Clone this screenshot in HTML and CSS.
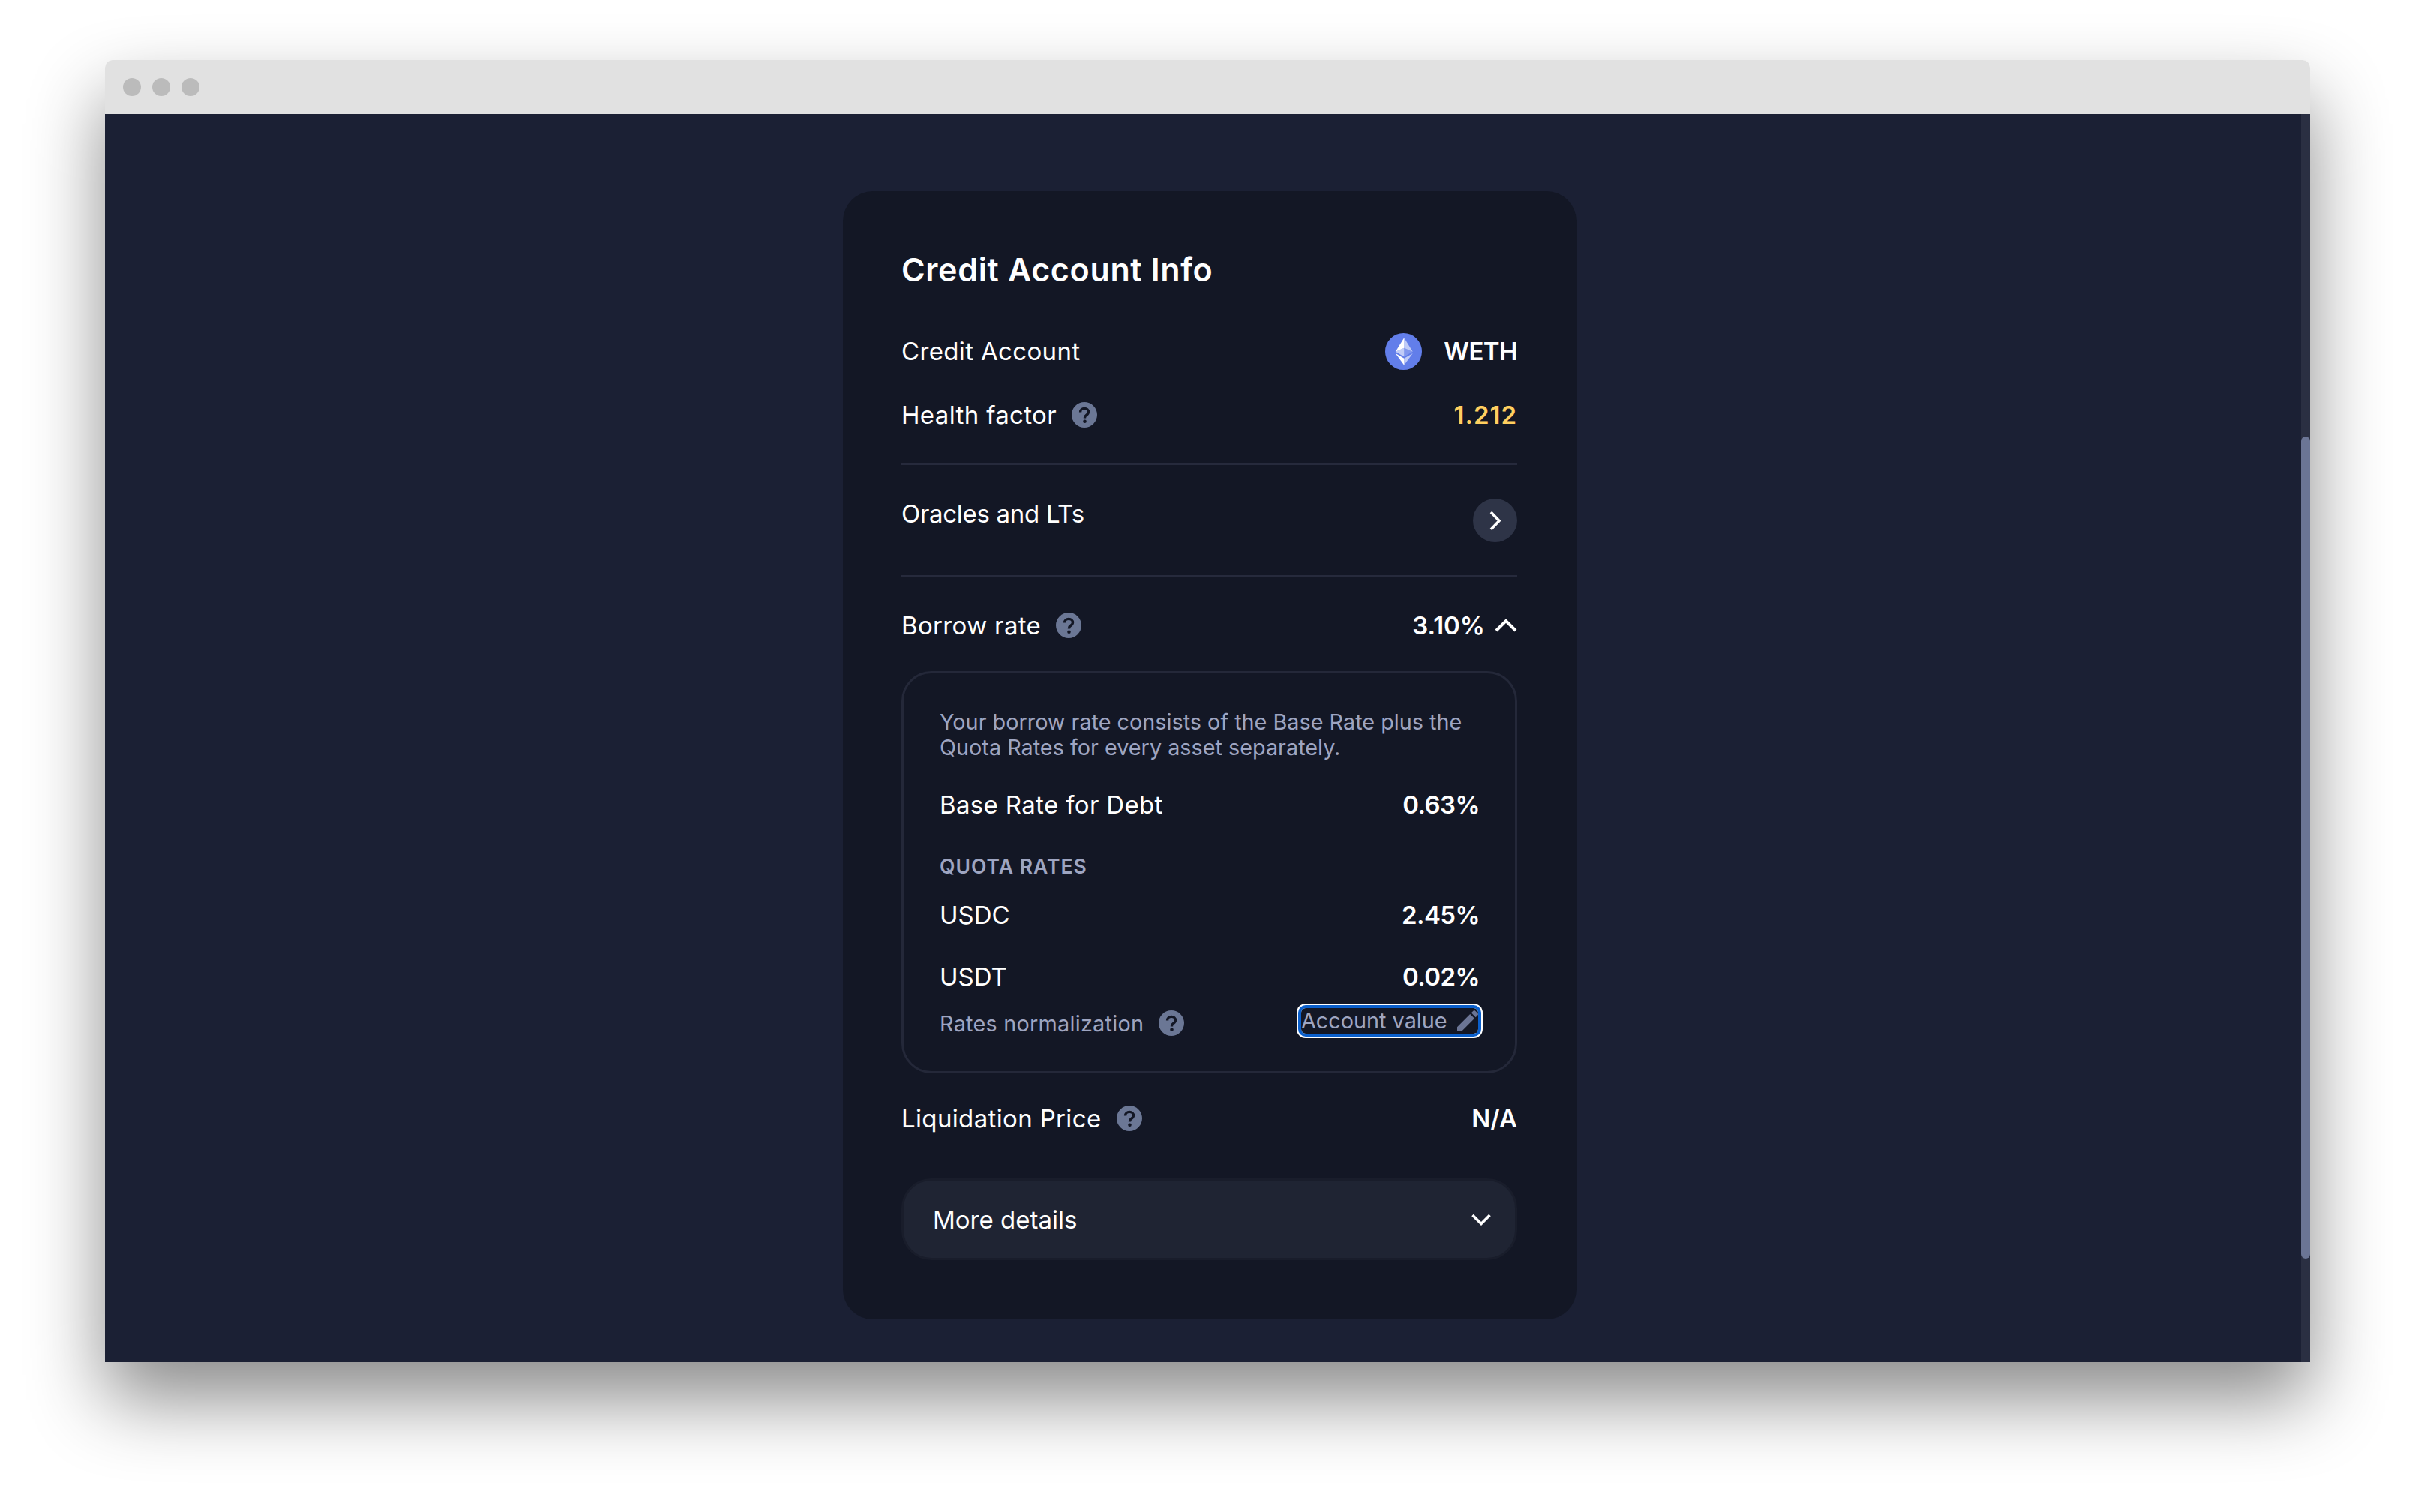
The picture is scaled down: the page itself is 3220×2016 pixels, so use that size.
FILE: index.html
```html
<!DOCTYPE html>
<html lang="en">
<head>
  <meta charset="UTF-8" />
  <title>Credit Account Info</title>
  <link rel="stylesheet" href="styles.css">
</head>
<body>
  <svg class="defs" width="0" height="0">
    <symbol id="help" viewBox="0 0 34 34">
      <circle cx="17" cy="17" r="17" fill="#6b7795"/>
      <path d="M11.6 13.4c0-3 2.4-5 5.5-5s5.4 1.9 5.4 4.7c0 2-1 3.100-2.700 4.200-1.600 1-2.300 1.800-2.300 3.500v.6" fill="none" stroke="#131725" stroke-width="3.400"/>
      <circle cx="17.500" cy="25.800" r="2.300" fill="#131725"/>
    </symbol>
  </svg>

  <div class="window">
    <div class="titlebar">
      <span class="dot"></span>
      <span class="dot"></span>
      <span class="dot"></span>
    </div>
    <div class="viewport">
      <main class="main">
        <section class="card">
          <h1>Credit Account Info</h1>

          <div class="row first">
            <span class="text">Credit Account</span>
            <span class="token">
              <svg class="eth" viewBox="0 0 32 32">
                <circle cx="16" cy="16" r="16" fill="#627eea"/>
                <g fill="#fff">
                  <path fill-opacity=".602" d="M16.498 4v8.87l7.497 3.35z"/>
                  <path d="M16.498 4L9 16.22l7.498-3.35z"/>
                  <path fill-opacity=".602" d="M16.498 21.968v6.027L24 17.616z"/>
                  <path d="M16.498 27.995v-6.028L9 17.616z"/>
                  <path fill-opacity=".2" d="M16.498 20.573l7.497-4.353-7.497-3.348z"/>
                  <path fill-opacity=".602" d="M9 16.22l7.498 4.353v-7.701z"/>
                </g>
              </svg>
              <b class="tight">WETH</b>
            </span>
          </div>
          <div class="row health">
            <span class="label text">Health factor <svg class="help"><use href="#help"/></svg></span>
            <b class="yellow">1.212</b>
          </div>

          <hr class="line top-line">

          <div class="row oracles">
            <span>Oracles and LTs</span>
            <span class="circle-btn">
              <svg viewBox="0 0 19 29" width="19" height="29"><path d="M3 3l11 11.500L3 26" fill="none" stroke="#fff" stroke-width="3.600"/></svg>
            </span>
          </div>

          <hr class="line">

          <div class="row borrow">
            <span class="label text">Borrow rate <svg class="help"><use href="#help"/></svg></span>
            <span class="rate">
              <b>3.10%</b>
              <svg viewBox="0 0 30 18" width="30" height="18"><path d="M2 16L15 3l13 13" fill="none" stroke="#fff" stroke-width="4"/></svg>
            </span>
          </div>

          <div class="box">
            <p class="note">Your borrow rate consists of the Base Rate plus the Quota Rates for every asset separately.</p>
            <div class="row base">
              <span class="text">Base Rate for Debt</span>
              <b class="tight">0.63%</b>
            </div>
            <div class="quota-title">QUOTA RATES</div>
            <div class="row usdc">
              <span>USDC</span>
              <b class="tight">2.45%</b>
            </div>
            <div class="row usdt">
              <span>USDT</span>
              <b class="tight">0.02%</b>
            </div>
            <div class="row norm">
              <span class="label small">Rates normalization <svg class="help"><use href="#help"/></svg></span>
              <button class="select">
                Account value
                <svg viewBox="3 3 18 18" width="28" height="28"><path d="M3 17.250V21h3.750L17.810 9.940l-3.750-3.750L3 17.250zM20.710 7.040c.39-.39.39-1.020 0-1.410l-2.340-2.340c-.39-.39-1.020-.39-1.410 0l-1.830 1.830 3.750 3.750 1.830-1.830z" fill="#6b7595"/></svg>
              </button>
            </div>
          </div>

          <div class="row liquidation">
            <span class="label text">Liquidation Price <svg class="help"><use href="#help"/></svg></span>
            <b>N/A</b>
          </div>

          <div class="more">
            <span>More details</span>
            <svg viewBox="0 0 26 16" width="26" height="16"><path d="M1.500 2L13 13.500 24.500 2" fill="none" stroke="#fff" stroke-width="3.600"/></svg>
          </div>
        </section>
      </main>
      <div class="scrollbar"><div class="thumb"></div></div>
    </div>
  </div>
</body>
</html>
```

FILE: styles.css
```css
html {
  background: #fff;
}
body {
  margin: 0;
  height: 2016px;
  padding-top: 80px;
  box-sizing: border-box;
  overflow: hidden;
  font-family: Inter, "Noto Sans", sans-serif;
  color: #fff;
  font-size: 33px;
}
.defs {
  display: block;
}

/* browser frame */
.window {
  margin: 0 140px;
  width: 2940px;
  border-radius: 10px 10px 0 0;
  box-shadow: 0 50px 100px rgba(0,0,0,0.46);
}
.titlebar {
  height: 72px;
  background: #e1e1e1;
  border-radius: 10px 10px 0 0;
  display: flex;
  align-items: center;
  gap: 15px;
  padding-left: 24px;
}
.dot {
  width: 24px;
  height: 24px;
  border-radius: 50%;
  background: #bbb;
}
.viewport {
  height: 1664px;
  background: #1b2034;
  display: flex;
}
.main {
  flex: 1;
  padding: 103px 0 0 984px;
}
.scrollbar {
  width: 12px;
  background: #2a2f42;
  padding-top: 430px;
}
.thumb {
  height: 1096px;
  background: #6b7595;
  border-radius: 6px;
}

/* card */
.card {
  width: 821px;
  padding: 79px 79px 79px 78px;
  background: #131725;
  border-radius: 40px;
}
h1 {
  margin: 0;
  font-size: 43px;
  line-height: 50px;
  font-weight: 600;
  letter-spacing: 0.65px;
}
.row {
  display: flex;
  justify-content: space-between;
  align-items: center;
  height: 50px;
}
b {
  font-weight: 600;
}
.text {
  letter-spacing: 0.35px;
}
.tight {
  letter-spacing: -0.6px;
}
.first { margin-top: 59px; }
.health { margin-top: 35px; }
.yellow {
  color: #ffcf5f;
  letter-spacing: 1px;
}
.label {
  display: flex;
  align-items: center;
  gap: 20px;
}
.help {
  width: 34px;
  height: 34px;
}
.token {
  display: flex;
  align-items: center;
  gap: 29px;
}
.eth {
  width: 49px;
  height: 49px;
}
.line {
  margin: 0;
  border: 0;
  height: 2px;
  background: #262a3c;
}
.top-line { margin-top: 40px; }
.oracles {
  margin: 45px 0 44px;
  height: 58px;
  align-items: flex-start;
}
.oracles > span:first-child {
  line-height: 40px;
  letter-spacing: -0.3px;
}
.circle-btn {
  width: 59px;
  height: 58px;
  padding-left: 2px;
  box-sizing: border-box;
  border-radius: 50%;
  background: #2e3447;
  display: flex;
  align-items: center;
  justify-content: center;
}
.borrow { margin-top: 40px; }
.rate {
  display: flex;
  align-items: center;
  gap: 13px;
}

/* borrow rate breakdown */
.box {
  margin-top: 36px;
  padding: 48px 47px 44px 48px;
  border: 3px solid #242839;
  border-radius: 40px;
}
.note {
  margin: 0;
  font-size: 28.800px;
  line-height: 34px;
  color: #9ea5c1;
}
.base, .usdc, .usdt {
  height: 40px;
}
.base { margin-top: 39px; }
.quota-title {
  margin-top: 47px;
  font-size: 26.500px;
  line-height: 30px;
  font-weight: 600;
  letter-spacing: 1px;
  color: #9ea5c1;
}
.usdc { margin-top: 30px; }
.usdt { margin-top: 42px; }
.norm {
  margin-top: 22px;
  height: 40px;
  align-items: flex-start;
}
.small {
  height: 40px;
  font-size: 28.800px;
  letter-spacing: 0.25px;
  color: #9ea5c1;
}
.select {
  width: 236px;
  height: 34px;
  margin-right: 2px;
  padding: 0;
  background: transparent;
  border: 0;
  border-radius: 6px;
  box-shadow: 0 0 0 4px #0a5fcc, 0 0 0 6px #fff;
  color: #9ea5c1;
  font: inherit;
  font-size: 28.800px;
  line-height: 34px;
  display: flex;
  align-items: center;
  justify-content: space-between;
}

.liquidation { margin-top: 35px; }
.more {
  margin-top: 55px;
  height: 103px;
  padding: 0 32px 0 39px;
  background: #1f2433;
  border: 3px solid #191d2b;
  border-radius: 40px;
  display: flex;
  align-items: center;
  justify-content: space-between;
}
```
